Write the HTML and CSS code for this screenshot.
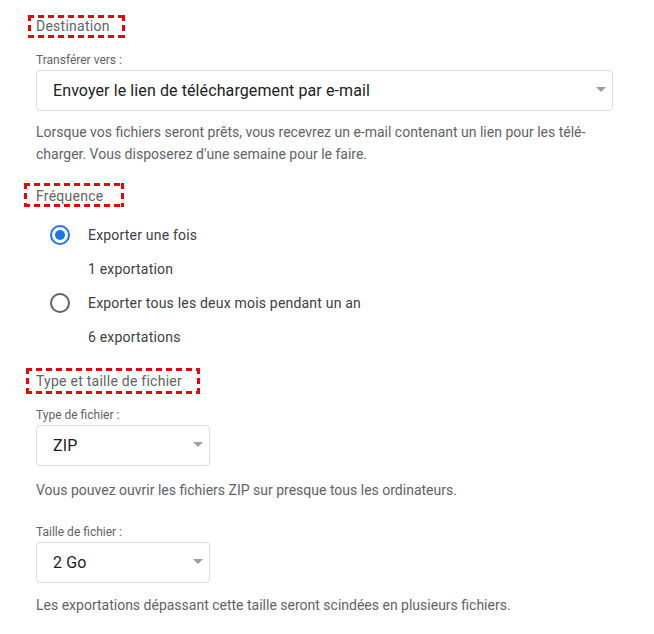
FILE: index.html
```html
<!DOCTYPE html>
<html lang="fr">
<head>
<meta charset="utf-8">
<title>Export</title>
<link rel="stylesheet" href="styles.css">
</head>
<body>
<div class="page">
  <h2 class="heading heading-dest">Destination</h2>
  <div class="label label-first">Transférer vers :</div>
  <div class="select select-wide">
    <span class="select-value">Envoyer le lien de téléchargement par e-mail</span>
    <span class="arrow"></span>
  </div>
  <p class="desc desc-first">Lorsque vos fichiers seront prêts, vous recevrez un e-mail contenant un lien pour les télé-<br>charger. Vous disposerez d'une semaine pour le faire.</p>

  <h2 class="heading heading-freq">Fréquence</h2>
  <div class="radios">
    <div class="row">
      <span class="radio radio-on"></span>
      <span class="row-text">Exporter une fois</span>
    </div>
    <div class="row row-sub"><span class="row-text">1 exportation</span></div>
    <div class="row">
      <span class="radio"></span>
      <span class="row-text">Exporter tous les deux mois pendant un an</span>
    </div>
    <div class="row row-sub"><span class="row-text">6 exportations</span></div>
  </div>

  <h2 class="heading heading-type">Type et taille de fichier</h2>
  <div class="label label-type">Type de fichier :</div>
  <div class="select select-small">
    <span class="select-value">ZIP</span>
    <span class="arrow"></span>
  </div>
  <p class="desc desc-type">Vous pouvez ouvrir les fichiers ZIP sur presque tous les ordinateurs.</p>
  <div class="label label-size">Taille de fichier :</div>
  <div class="select select-small">
    <span class="select-value">2 Go</span>
    <span class="arrow"></span>
  </div>
  <p class="desc desc-size">Les exportations dépassant cette taille seront scindées en plusieurs fichiers.</p>
</div>
</body>
</html>
```

FILE: styles.css
```css
* { box-sizing: border-box; }
html, body { margin: 0; padding: 0; background: #fff; }
body {
  font-family: Roboto, "Liberation Sans", Arial, sans-serif;
  color: #5f6368;
}
.page {
  padding: 0 0 0 36px;
  width: 654px;
}
.heading {
  display: inline-block;
  margin: 0;
  font-size: 14px;
  font-weight: 400;
  line-height: 17px;
  letter-spacing: 0.25px;
  color: #5f6368;
  background:
    linear-gradient(90deg, #e8000b 65%, transparent 0) left top / 10px 3px repeat-x,
    linear-gradient(90deg, #e8000b 65%, transparent 0) left bottom / 10px 3px repeat-x,
    linear-gradient(180deg, #e8000b 65%, transparent 0) left top / 3px 10px repeat-y,
    linear-gradient(180deg, #e8000b 65%, transparent 0) right top / 3px 10px repeat-y;
}
.heading-dest {
  margin-top: 15px;
  margin-left: -8px;
  padding: 3px 15px 3px 8px;
}
.heading-freq {
  display: block;
  width: 100px;
  margin-top: 18px;
  margin-left: -12px;
  padding: 5px 0 0 12px;
  height: 24px;
}
.heading-type {
  display: block;
  width: 174px;
  margin-top: 14px;
  margin-left: -10px;
  padding: 5px 0 0 10px;
  height: 26px;
}
.label {
  font-size: 12px;
  line-height: 16px;
  color: #5f6368;
}
.label-first { margin-top: 14px; }
.label-type { margin-top: 13px; }
.label-size { margin-top: 23px; }
.select {
  display: flex;
  align-items: center;
  justify-content: space-between;
  height: 41px;
  margin-top: 2px;
  padding: 0 6px 0 16px;
  border: 1px solid #dadce0;
  border-radius: 4px;
  background: #fff;
}
.select-wide { width: 577px; }
.select-small { width: 174px; }
.select-value {
  font-size: 16px;
  letter-spacing: 0.1px;
  color: #202124;
}
.arrow {
  width: 0;
  height: 0;
  border-left: 5px solid transparent;
  border-right: 5px solid transparent;
  border-top: 5px solid #9e9e9e;
  margin-top: -2px;
}
.desc {
  margin: 0;
  font-size: 14px;
  line-height: 22px;
  color: #5f6368;
}
.desc-first { margin-top: 10px; }
.desc-type { margin-top: 13px; }
.desc-size { margin-top: 11px; }
.radios { margin-top: 11px; }
.row {
  display: flex;
  align-items: center;
  height: 34px;
  padding-left: 14px;
  gap: 18px;
}
.row-sub { padding-left: 52px; }
.row-text {
  font-size: 14px;
  letter-spacing: 0.2px;
  color: #3c4043;
}
.radio {
  position: relative;
  width: 20px;
  height: 20px;
  border: 2px solid #5f6368;
  border-radius: 50%;
  flex: none;
}
.radio-on { border-color: #1a73e8; }
.radio-on::after {
  content: "";
  position: absolute;
  left: 3px;
  top: 3px;
  width: 10px;
  height: 10px;
  border-radius: 50%;
  background: #1a73e8;
}
```
